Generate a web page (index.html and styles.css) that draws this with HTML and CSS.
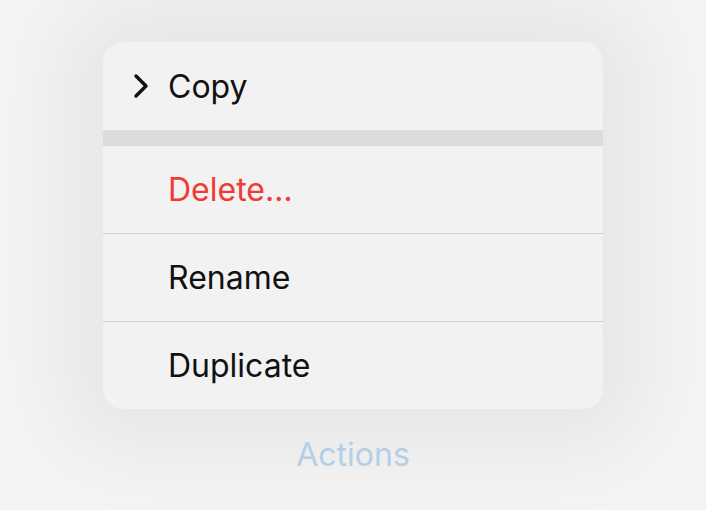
FILE: index.html
```html
<!DOCTYPE html>
<html>
<head>
<meta charset="utf-8">
<link rel="stylesheet" href="styles.css">
</head>
<body>
<div class="stage">
  <div class="menu">
    <div class="row">
      <svg class="chev" width="18" height="26" viewBox="0 0 18 26"><path d="M4 3 L14 13 L4 23" fill="none" stroke="#111" stroke-width="3.5" stroke-linecap="round" stroke-linejoin="round"/></svg>
      <span class="label">Copy</span>
    </div>
    <div class="gap"></div>
    <div class="row danger"><span class="label">Delete…</span></div>
    <div class="row"><span class="label">Rename</span></div>
    <div class="row"><span class="label">Duplicate</span></div>
  </div>
  <div class="title">Actions</div>
</div>
</body>
</html>
```
FILE: styles.css
```css
html, body {
  margin: 0;
  padding: 0;
  width: 706px;
  height: 510px;
  overflow: hidden;
  background: #f4f4f4;
  font-family: Inter, "Noto Sans", sans-serif;
}
.stage {
  display: flex;
  flex-direction: column;
  align-items: center;
  padding-top: 42px;
}
.menu {
  width: 500px;
  background: #f2f2f2;
  border-radius: 20px;
  overflow: hidden;
  box-shadow: 0 0 90px 40px rgba(0,0,0,0.06);
  display: flex;
  flex-direction: column;
}
.row {
  height: 87px;
  display: flex;
  align-items: center;
  padding-left: 65px;
  position: relative;
  border-bottom: 1px solid #cfcfcf;
}
.row:first-child {
  height: 88px;
  border-bottom: none;
}
.row:last-child {
  border-bottom: none;
  height: 87px;
}
.chev {
  position: absolute;
  left: 29px;
  top: 31px;
}
.gap {
  height: 16px;
  background: #dcdcdc;
}
.label {
  font-size: 32px;
  color: #111;
}
.danger .label {
  color: #f23a35;
}
.title {
  margin-top: 26px;
  font-size: 32px;
  color: #b5cfe8;
}
```
